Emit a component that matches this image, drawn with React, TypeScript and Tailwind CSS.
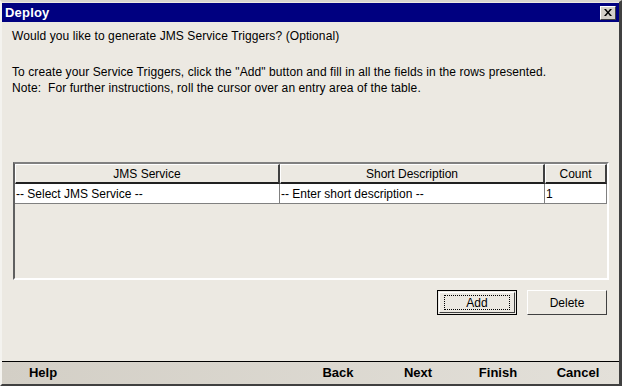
const font = { fontFamily: '"Liberation Sans", Arial, sans-serif' };

const HeaderCell = ({ label, className }: { label: string; className: string }) => (
  <div
    className={`h-[20px] flex items-center justify-center bg-[#ECE9E2] border-t border-l border-t-white border-l-white border-r-2 border-b-2 border-r-[#404040] border-b-[#202020] ${className}`}
  >
    {label}
  </div>
);

const FooterButton = ({ label, className = "" }: { label: string; className?: string }) => (
  <button className={`w-[80px] h-full flex items-center justify-center font-bold text-[13px] text-black ${className}`}>
    {label}
  </button>
);

export default function App() {
  return (
    <div
      className="w-[622px] h-[386px] flex flex-col bg-[#ECE9E2] border-t-2 border-l-2 border-t-[#D8D5CE] border-l-[#F4F3EF] border-r-[3px] border-b-2 border-r-[#404040] border-b-[#404040] text-[12px] text-black"
      style={font}
    >
      {/* Title bar */}
      <div className="h-[19px] mt-px flex items-center justify-between bg-[#000080] pl-[3px] pr-[3px]">
        <span className="text-white font-bold text-[13px] tracking-[0.2px]">Deploy</span>
        <div className="w-[16px] h-[14px] flex items-center justify-center bg-[#D4D0C8] border border-t-white border-l-white border-r-[#404040] border-b-[#404040]">
          <svg width="8" height="7" viewBox="0 0 8 7">
            <path d="M0 0h2l2 2.5L6 0h2L5 3.5 8 7H6L4 4.5 2 7H0l3-3.5z" fill="#000" />
          </svg>
        </div>
      </div>

      {/* Body */}
      <div className="flex-1 flex flex-col pt-[6px] px-[10px] tracking-[0.09px]">
        <p className="leading-[16px]">Would you like to generate JMS Service Triggers? (Optional)</p>
        <div className="h-[20px]" />
        <p className="leading-[16px]">
          To create your Service Triggers, click the "Add" button and fill in all the fields in the rows presented.
        </p>
        <p className="leading-[16px] whitespace-pre">Note:  For further instructions, roll the cursor over an entry area of the table.</p>

        {/* Table */}
        <div className="mt-[66px] ml-px w-[596px] h-[118px] flex flex-col border-t-2 border-l-2 border-t-[#808080] border-l-[#606060] border-r-2 border-b-2 border-r-white border-b-white tracking-normal">
          <div className="flex">
            <HeaderCell label="JMS Service" className="w-[265px]" />
            <HeaderCell label="Short Description" className="w-[265px]" />
            <HeaderCell label="Count" className="w-[62px]" />
          </div>
          <div className="flex h-[20px] bg-white border-b border-[#808080]">
            <div className="w-[265px] pl-px flex items-center border-r border-[#808080]">-- Select JMS Service --</div>
            <div className="w-[265px] pl-px flex items-center border-r border-[#808080]">-- Enter short description --</div>
            <div className="w-[62px] pl-px flex items-center border-r border-[#808080]">1</div>
          </div>
          <div className="flex-1" />
        </div>

        {/* Add / Delete */}
        <div className="flex justify-end gap-[10px] mt-[10px] pr-[2px] tracking-normal">
          <button className="w-[80px] h-[25px] border border-black p-px bg-[#ECE9E2]">
            <div className="w-full h-full flex items-center justify-center border border-t-white border-l-white border-r-[#404040] border-b-[#404040]">
              <span className="w-[66px] h-[15px] flex items-center justify-center border border-dotted border-black">Add</span>
            </div>
          </button>
          <button className="w-[80px] h-[25px] flex items-center justify-center bg-[#ECE9E2] border border-t-white border-l-white border-r-[#404040] border-b-[#404040]">
            Delete
          </button>
        </div>
      </div>

      {/* Footer */}
      <div className="h-[23px] flex border-t border-black bg-gradient-to-r from-[#D3CFC6] to-[#E3E0D9]">
        <FooterButton label="Help" className="ml-[1px]" />
        <div className="flex-1" />
        <FooterButton label="Back" />
        <FooterButton label="Next" />
        <FooterButton label="Finish" />
        <FooterButton label="Cancel" className="mr-[1px]" />
      </div>
    </div>
  );
}
